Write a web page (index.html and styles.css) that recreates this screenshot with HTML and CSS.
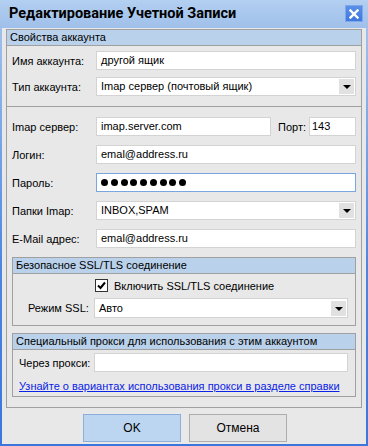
FILE: index.html
```html
<!DOCTYPE html>
<html lang="ru">

<head>
    <meta charset="UTF-8">
    <title>Редактирование Учетной Записи</title>
    <link rel="stylesheet" href="styles.css">
</head>

<body>
    <div class="window">
        <div class="titlebar">
            <span class="title">Редактирование Учетной Записи</span>
            <span class="close-btn">
                <svg width="10" height="10" viewBox="0 0 10 10">
                    <path d="M1.5 1.5 L8.5 8.5 M8.5 1.5 L1.5 8.5" stroke="#fff" stroke-width="2.4" stroke-linecap="square"/>
                </svg>
            </span>
        </div>

        <div class="client">
            <div class="group">
                <div class="group-title">Свойства аккаунта</div>
                <div class="group-body">
                    <div class="row">
                        <label class="lbl">Имя аккаунта:</label>
                        <div class="field">другой ящик</div>
                    </div>
                    <div class="row row-tight">
                        <label class="lbl">Тип аккаунта:</label>
                        <div class="field combo">
                            <span>Imap сервер (почтовый ящик)</span>
                            <span class="arrow"></span>
                        </div>
                    </div>

                    <div class="separator"></div>

                    <div class="row">
                        <label class="lbl">Imap сервер:</label>
                        <div class="field server">imap.server.com</div>
                        <label class="port-lbl">Порт:</label>
                        <div class="field port">143</div>
                    </div>
                    <div class="row">
                        <label class="lbl">Логин:</label>
                        <div class="field">emal@address.ru</div>
                    </div>
                    <div class="row">
                        <label class="lbl">Пароль:</label>
                        <div class="field focused">
                            <span class="dot"></span><span class="dot"></span><span class="dot"></span>
                            <span class="dot"></span><span class="dot"></span><span class="dot"></span>
                            <span class="dot"></span><span class="dot"></span><span class="dot"></span>
                        </div>
                    </div>
                    <div class="row">
                        <label class="lbl">Папки Imap:</label>
                        <div class="field combo">
                            <span>INBOX,SPAM</span>
                            <span class="arrow"></span>
                        </div>
                    </div>
                    <div class="row">
                        <label class="lbl">E-Mail адрес:</label>
                        <div class="field">emal@address.ru</div>
                    </div>

                    <div class="subgroup ssl">
                        <div class="group-title">Безопасное SSL/TLS соединение</div>
                        <div class="subgroup-body">
                            <div class="check-row">
                                <span class="checkbox">
                                    <svg width="11" height="11" viewBox="0 0 11 11">
                                        <path d="M2 5.5 L4.5 8 L9 2.5" fill="none" stroke="#000" stroke-width="2"/>
                                    </svg>
                                </span>
                                <span>Включить SSL/TLS соединение</span>
                            </div>
                            <div class="sub-row">
                                <label class="sub-lbl">Режим SSL:</label>
                                <div class="field combo tall">
                                    <span>Авто</span>
                                    <span class="arrow"></span>
                                </div>
                            </div>
                        </div>
                    </div>

                    <div class="subgroup proxy">
                        <div class="group-title">Специальный прокси для использования с этим аккаунтом</div>
                        <div class="subgroup-body">
                            <div class="sub-row">
                                <label class="sub-lbl">Через прокси:</label>
                                <div class="field"></div>
                            </div>
                            <a class="help-link" href="#">Узнайте о вариантах использования прокси в разделе справки</a>
                        </div>
                    </div>
                </div>
            </div>

            <div class="buttons">
                <button class="btn btn-default">OK</button>
                <button class="btn">Отмена</button>
            </div>
        </div>
    </div>
</body>

</html>
```

FILE: styles.css
```css
body {
    margin: 0;
    padding: 0;
    font-family: 'Liberation Sans', Arial, sans-serif;
    font-size: 11px;
    color: #000;
    background: #e8e8e8;
}

.window {
    width: 368px;
    height: 446px;
    box-sizing: border-box;
    padding: 0 2px 2px;
    background: linear-gradient(#a9c7ee, #4c86e2 60%, #3a76dc);
    display: flex;
    flex-direction: column;
}

.titlebar {
    height: 28px;
    margin: 0 -2px;
    padding: 0 6px 0 9px;
    display: flex;
    align-items: center;
    justify-content: space-between;
    background: linear-gradient(#b3cff1, #9fc0ea);
    box-sizing: border-box;
}

.title {
    font-family: Roboto, 'Liberation Sans', sans-serif;
    font-size: 14.5px;
    font-weight: bold;
    color: #000;
    margin-top: -1px;
}

.close-btn {
    width: 16px;
    height: 15px;
    margin-top: -1px;
    margin-right: -1px;
    display: flex;
    align-items: center;
    justify-content: center;
    background: linear-gradient(#5b8fe8, #3f78df);
    border: 1px solid #7fa8ec;
}

.client {
    flex: 1;
    background: #e8e8e8;
    padding: 1px 4px 0;
}

.group {
    border: 1px solid #a0a0a0;
    padding-bottom: 10px;
}

.group-title {
    height: 15px;
    line-height: 15px;
    padding-left: 3px;
    background: #b9d1ea;
    border-bottom: 1px solid #a0a0a0;
}

.group-body {
    padding: 5px 5px 0;
}

.row {
    display: flex;
    align-items: center;
    height: 19px;
    margin-bottom: 9px;
}

.row-tight {
    margin-top: -2px;
    margin-bottom: 0;
}

.lbl {
    width: 84px;
    flex: none;
}

.field {
    flex: 1;
    height: 19px;
    box-sizing: border-box;
    border: 1px solid #d3d3d3;
    background: #fff;
    padding: 0 4px;
    line-height: 17px;
    display: flex;
    align-items: center;
}

.field.server {
    flex: none;
    width: 175px;
}

.port-lbl {
    margin: 0 3px 0 7px;
}

.field.port {
    flex: none;
    width: 47px;
    padding-left: 2px;
}

.field.focused {
    border-color: #7aa6e0;
    gap: 2.75px;
}

.dot {
    width: 7px;
    height: 7px;
    border-radius: 50%;
    background: #000;
}

.combo {
    justify-content: space-between;
    padding-right: 1px;
}

.combo.tall {
    height: 20px;
}

.arrow {
    width: 15px;
    height: 15px;
    background: #e1e1e1;
    position: relative;
}

.arrow::after {
    content: '';
    position: absolute;
    left: 4px;
    top: 6px;
    border-left: 4px solid transparent;
    border-right: 4px solid transparent;
    border-top: 4px solid #000;
}

.separator {
    margin: 10px -5px 10px;
    border-top: 1px solid #a0a0a0;
}

.subgroup {
    border: 1px solid #a0a0a0;
    margin-top: 8px;
}

.subgroup-body {
    padding: 5px 7px 7px 15px;
}

.check-row {
    display: flex;
    align-items: center;
    height: 13px;
    margin-left: 67px;
    margin-bottom: 6px;
}

.checkbox {
    width: 11px;
    height: 11px;
    border: 1px solid #333;
    background: #fff;
    margin-right: 6px;
    display: flex;
}

.sub-row {
    display: flex;
    align-items: center;
}

.sub-lbl {
    width: 66px;
    flex: none;
}

.proxy {
    margin-top: 7px;
}

.proxy .subgroup-body {
    padding: 3px 7px 3px 6px;
}

.proxy .sub-lbl {
    width: 75px;
}

.help-link {
    display: block;
    margin-top: 7px;
    line-height: 14px;
    color: #0b23e6;
    text-decoration: underline;
    white-space: nowrap;
}

.buttons {
    display: flex;
    justify-content: center;
    gap: 8px;
    margin-top: 6px;
    padding-left: 2px;
}

.btn {
    width: 98px;
    height: 28px;
    font-family: 'Liberation Sans', Arial, sans-serif;
    font-size: 12px;
    background: #e3e3e3;
    border: 1px solid #adadad;
    color: #000;
    padding: 0;
}

.btn-default {
    background: #bcd6f1;
    border-color: #8eaedb;
}
```
